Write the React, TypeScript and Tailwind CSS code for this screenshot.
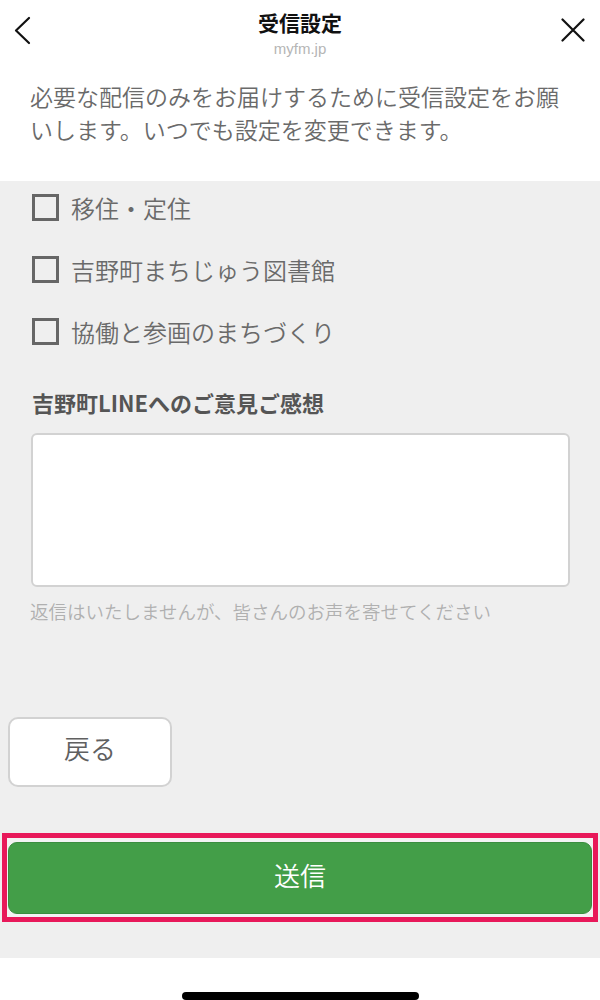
import React from 'react';

const topics = ['移住・定住', '吉野町まちじゅう図書館', '協働と参画のまちづくり'];

const App: React.FC = () => {
  return (
    <div
      className="w-[600px] h-[1000px] flex flex-col bg-white overflow-hidden"
      style={{ fontFamily: '"Noto Sans CJK JP", "Noto Sans", "Liberation Sans", sans-serif' }}
    >
      {/* header */}
      <div className="flex justify-between h-[57px]">
        <div className="w-[80px] pl-[14px] pt-[16px]">
          <svg width="18" height="30" viewBox="0 0 18 30" fill="none" stroke="#111" strokeWidth="2.2" strokeLinecap="round" strokeLinejoin="round">
            <path d="M15 2 L2 14.5 L15 27" />
          </svg>
        </div>
        <div className="flex flex-col items-center pt-[9px]">
          <div className="text-[21px] leading-[26px] font-bold text-[#111]">受信設定</div>
          <div className="mt-[5px] text-[15px] leading-[18px] text-[#b5b5b5]" style={{ fontFamily: '"Liberation Sans", sans-serif' }}>
            myfm.jp
          </div>
        </div>
        <div className="w-[80px] flex justify-end pr-[15px] pt-[18px]">
          <svg width="24" height="24" viewBox="0 0 24 24" fill="none" stroke="#111" strokeWidth="2.2" strokeLinecap="round">
            <path d="M1.5 1.5 L22.5 22.5 M22.5 1.5 L1.5 22.5" />
          </svg>
        </div>
      </div>

      <p className="px-[30px] pt-[23px] pb-[35px] text-[23px] leading-[33px] font-[350] text-[#6a6a6a]">
        必要な配信のみをお届けするために受信設定をお願いします。いつでも設定を変更できます。
      </p>

      {/* form */}
      <div className="flex-1 bg-[#efefef] flex flex-col">
        <div className="flex flex-col gap-[35px] pl-[32px] pt-[13px]">
          {topics.map((t) => (
            <label key={t} className="flex items-center gap-[12px]">
              <span className="w-[27px] h-[27px] border-[3px] border-[#666]" />
              <span className="text-[24px] leading-[27px] font-[350] text-[#6a6a6a]">{t}</span>
            </label>
          ))}
        </div>

        <h3 className="mt-[43px] ml-[32px] text-[22px] leading-[28px] font-bold text-[#555]">
          吉野町LINEへのご意見ご感想
        </h3>
        <textarea className="mt-[17px] ml-[31px] w-[539px] h-[154px] bg-white border-2 border-[#d2d2d2] rounded-[6px] resize-none outline-none" />
        <p className="mt-[13px] ml-[30px] text-[18.5px] leading-[22px] font-[350] text-[#b0b0b0]">
          返信はいたしませんが、皆さんのお声を寄せてください
        </p>

        <button className="mt-[95px] ml-[8px] w-[164px] h-[70px] pb-[8px] bg-white border-2 border-[#d2d2d2] rounded-[10px] text-[26px] leading-[30px] font-[350] text-[#606060]">
          戻る
        </button>

        <div className="mt-[46px] ml-[2px] w-[596px] h-[89px] border-[5px] border-[#e8195a] bg-[#f3f3f3] pt-[4px] pb-[3px] px-[1px]">
          <button className="w-full h-full pb-[6px] bg-[#439e48] border border-[#3b8d40] rounded-[9px] text-[26px] leading-[30px] font-[350] text-white">
            送信
          </button>
        </div>
      </div>

      {/* home indicator */}
      <div className="h-[42px] flex justify-center pt-[34px]">
        <div className="w-[237px] h-[8px] rounded-full bg-black" />
      </div>
    </div>
  );
};

export default App;
